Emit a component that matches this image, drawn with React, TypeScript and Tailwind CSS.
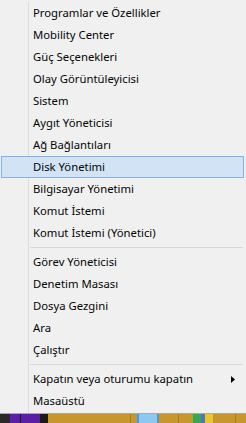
import React from "react";

type Item = { label: string; active?: boolean; arrow?: boolean };

const group1: Item[] = [
  { label: "Programlar ve Özellikler" },
  { label: "Mobility Center" },
  { label: "Güç Seçenekleri" },
  { label: "Olay Görüntüleyicisi" },
  { label: "Sistem" },
  { label: "Aygıt Yöneticisi" },
  { label: "Ağ Bağlantıları" },
  { label: "Disk Yönetimi", active: true },
  { label: "Bilgisayar Yönetimi" },
  { label: "Komut İstemi" },
  { label: "Komut İstemi (Yönetici)" },
];
const group2: Item[] = [
  { label: "Görev Yöneticisi" },
  { label: "Denetim Masası" },
  { label: "Dosya Gezgini" },
  { label: "Ara" },
  { label: "Çalıştır" },
];
const group3: Item[] = [
  { label: "Kapatın veya oturumu kapatın", arrow: true },
  { label: "Masaüstü" },
];

function Row({ item }: { item: Item }) {
  if (item.active) {
    return (
      <div className="h-[22px] flex pr-[2px] pl-[1px]">
        <div className="flex-1 flex items-center border border-[#7eb4ea] bg-[#d1e3f4] pl-[31px]">
          <span>{item.label}</span>
        </div>
      </div>
    );
  }
  return (
    <div className="h-[22px] flex">
      <div className="w-[28px] shrink-0" />
      <div className="flex-1 flex items-center border-l border-[#dcdcdc] pl-[4px] pr-[10px]">
        <span className="flex-1">{item.label}</span>
        {item.arrow && (
          <svg width="4" height="7" viewBox="0 0 4 7" className="mr-[1px]">
            <path d="M0 0 L4 3.5 L0 7 Z" fill="#000" />
          </svg>
        )}
      </div>
    </div>
  );
}

function Separator() {
  return (
    <div className="h-[7px] flex">
      <div className="w-[28px] shrink-0" />
      <div className="flex-1 border-l border-[#dcdcdc] pl-[1px] pr-[3px] flex items-center">
        <div className="flex-1 h-[1px] bg-[#d7d7d7]" />
      </div>
    </div>
  );
}

export default function App() {
  return (
    <div
      className="w-[246px] h-[423px] overflow-hidden flex flex-col text-[11.3px] text-[#050505]"
      style={{ fontFamily: '"Noto Sans", "Open Sans", sans-serif' }}
    >
      <div className="bg-[#f0f0f0] flex flex-col pt-[2px] h-[414px] border-b border-[#a8a8a8]">
        {group1.map((i) => (
          <Row key={i.label} item={i} />
        ))}
        <Separator />
        {group2.map((i) => (
          <Row key={i.label} item={i} />
        ))}
        <Separator />
        {group3.map((i) => (
          <Row key={i.label} item={i} />
        ))}
        <div className="flex-1 flex">
          <div className="w-[28px] shrink-0" />
          <div className="flex-1 border-l border-[#dcdcdc]" />
        </div>
      </div>
      <div className="flex-1 flex bg-[#c8962f]">
        <div className="w-[10px] bg-[#2a2a2a]" />
        <div className="w-[10px] bg-[#5b1fa6]" />
        <div className="w-[1px] bg-[#1a1a1a]" />
        <div className="w-[19px] bg-[#5b1fa6]" />
        <div className="w-[8px] bg-[#1a1a1a]" />
        <div className="w-[82px] bg-[#c8962f]" />
        <div className="w-[1px] bg-[#a87a20]" />
        <div className="w-[6px] bg-[#c8962f]" />
        <div className="w-[22px] bg-[#8cc8f0] border-x-2 border-[#4a98d8]" />
        <div className="w-[19px] bg-[#c8962f]" />
        <div className="w-[1px] bg-[#a87a20]" />
        <div className="w-[14px] bg-[#c8962f]" />
        <div className="w-[8px] bg-[#3aa84a]" />
        <div className="w-[4px] bg-[#4a78c8]" />
        <div className="w-[8px] bg-[#e8c830]" />
        <div className="w-[22px] bg-[#c8962f]" />
        <div className="w-[1px] bg-[#a87a20]" />
        <div className="flex-1 bg-[#c8962f]" />
      </div>
    </div>
  );
}
